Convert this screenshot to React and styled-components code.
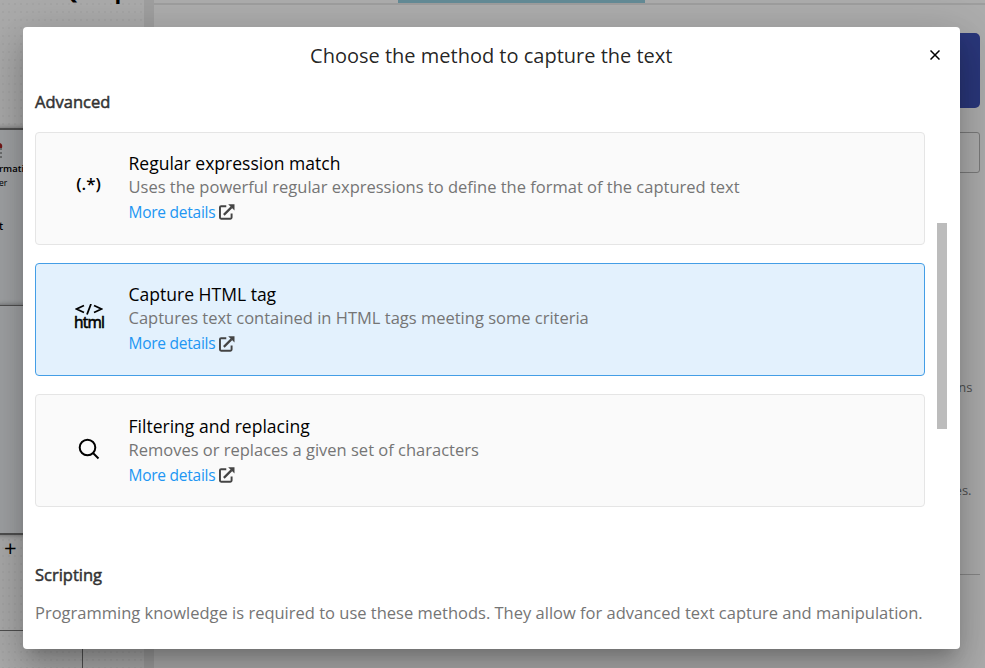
import React, { useState } from 'react';
import styled, { createGlobalStyle } from 'styled-components';

const GlobalStyle = createGlobalStyle`
  * {
    box-sizing: border-box;
  }

  body {
    margin: 0;
    overflow: hidden;
    font-family: 'Open Sans', 'Noto Sans', sans-serif;
  }
`;

const Page = styled.div`
  position: relative;
  display: flex;
  width: 985px;
  height: 668px;
  overflow: hidden;
  background: #fff;
`;

const Canvas = styled.div`
  position: relative;
  width: 144px;
  overflow: hidden;
  background-color: #fdfdfd;
  background-image: radial-gradient(#f3f3f3 0.7px, transparent 0.9px);
  background-size: 6px 8px;
`;

const CanvasTitle = styled.div`
  position: absolute;
  left: 61px;
  top: -23px;
  font-size: 22px;
  font-weight: 700;
  line-height: 26px;
  white-space: pre;
  word-spacing: 0.3px;
`;

const Node = styled.div`
  position: absolute;
  left: -60px;
  top: ${(p) => p.$top}px;
  width: ${(p) => p.$width}px;
  height: ${(p) => p.$height}px;
  background: ${(p) => p.$fill || 'transparent'};
  border: solid #777;
  border-width: ${(p) => p.$border || '1px'};
  box-shadow: ${(p) => (p.$raised ? '0 0 5px rgba(0, 0, 0, 0.4)' : 'none')};
`;

const NodeText = styled.div`
  position: absolute;
  left: ${(p) => p.$left}px;
  top: ${(p) => p.$top}px;
  font-size: ${(p) => p.$size}px;
  line-height: 14px;
  font-weight: ${(p) => p.$weight || 600};
  color: #000;
  white-space: nowrap;
`;

const NodeIcon = styled.svg`
  position: absolute;
  left: 0;
  top: 142px;
`;

const Divider = styled.div`
  width: 10px;
  background: #eaeaea;
`;

const Panel = styled.div`
  flex: 1;
  display: flex;
  flex-direction: column;
  align-items: flex-end;
  padding-right: 5.5px;
`;

const TabBar = styled.div`
  align-self: stretch;
  height: 5px;
  margin-right: -6px;
  padding-left: 244px;
  border-bottom: 2px solid #e9e9e9;
`;

const ActiveTab = styled.div`
  width: 247px;
  height: 3px;
  background: #94cddd;
`;

const PanelButton = styled.div`
  width: 120px;
  height: 75px;
  margin-top: 27.5px;
  border-radius: 5px;
  background: #3f51b5;
`;

const PanelField = styled.div`
  width: 120px;
  height: 41px;
  margin-top: 24.5px;
  border: 1px solid #b5b5b5;
  border-radius: 3px;
`;

const PanelText = styled.p`
  margin: ${(p) => p.$gap}px ${(p) => p.$right}px 0 0;
  color: #777;
  font-size: 13px;
  line-height: 20px;
`;

const PanelRule = styled.div`
  width: 120px;
  margin-top: 74px;
  border-top: 1px solid #c8c8c8;
`;

const Backdrop = styled.div`
  position: absolute;
  inset: 0;
  display: flex;
  align-items: flex-start;
  padding: 27px 0 0 23px;
  background: rgba(0, 0, 0, 0.32);
`;

const Dialog = styled.div`
  display: flex;
  flex-direction: column;
  width: 936.5px;
  height: 621.5px;
  border-radius: 4px;
  background: #fff;
  box-shadow: 0 11px 15px -7px rgba(0, 0, 0, 0.2), 0 24px 38px 3px rgba(0, 0, 0, 0.14),
    0 9px 46px 8px rgba(0, 0, 0, 0.12);
`;

const DialogHeader = styled.div`
  display: grid;
  grid-template-columns: 48px 1fr 48px;
  align-items: center;
  height: 56px;
`;

const DialogTitle = styled.h2`
  grid-column: 2;
  margin: 0;
  padding-top: 2px;
  color: rgba(0, 0, 0, 0.87);
  font-size: 20px;
  font-weight: 400;
  line-height: 32px;
  text-align: center;
`;

const CloseButton = styled.button`
  display: flex;
  justify-content: center;
  padding: 0 1.5px 0 0;
  border: 0;
  background: none;
  color: #000;
`;

const DialogBody = styled.div`
  flex: 1;
  display: flex;
  justify-content: space-between;
  padding: 0 12px;
`;

const Methods = styled.div`
  width: 890px;
`;

const SectionTitle = styled.h3`
  margin: ${(p) => p.$gap}px 0 0;
  color: #333;
  font-size: 16.5px;
  font-weight: 400;
  line-height: 24px;
  -webkit-text-stroke: 0.5px #333;
`;

const MethodList = styled.div`
  display: flex;
  flex-direction: column;
  gap: 18.4px;
  margin-top: 17.5px;
`;

const MethodCard = styled.div`
  display: flex;
  height: 113px;
  padding-top: 18.3px;
  border: 1px solid ${(p) => (p.$selected ? '#449ee6' : '#e5e5e5')};
  border-radius: 4px;
  background: ${(p) => (p.$selected ? '#e3f1fd' : '#fafafa')};
  cursor: pointer;
`;

const MethodIcon = styled.div`
  display: flex;
  align-items: center;
  justify-content: center;
  width: 106px;
  height: 70px;
  padding-right: 1px;
  margin-right: -13.5px;
`;

const Regex = styled.span`
  padding-bottom: 4px;
  font-size: 17px;
  font-weight: 600;
  line-height: 20px;
`;

const HtmlMark = styled.span`
  display: flex;
  flex-direction: column;
  align-items: center;
  gap: 0;
  padding-left: 1px;
  font-size: 15.5px;
  font-weight: 400;
  letter-spacing: -0.8px;
  line-height: 15px;
  -webkit-text-stroke: 0.6px #000;
`;

const MethodTitle = styled.div`
  color: #000;
  font-size: 17.55px;
  line-height: 24px;
`;

const MethodText = styled.div`
  color: #757575;
  font-size: 16.5px;
  line-height: 24px;
`;

const MoreLink = styled.a`
  display: flex;
  align-items: center;
  gap: 4px;
  margin-top: 1px;
  color: #2196f3;
  font-size: 15.5px;
  letter-spacing: -0.25px;
  line-height: 25px;
`;

const Note = styled.p`
  margin: 12.5px 0 0;
  color: #757575;
  font-size: 16.5px;
  line-height: 26px;
  white-space: nowrap;
`;

const ScrollTrack = styled.div`
  width: 11px;
  padding-top: 140px;
`;

const ScrollThumb = styled.div`
  width: 10.5px;
  height: 206px;
  background: #bcbcbc;
`;

const TagIcon = () => (
  <svg width="28" height="11" viewBox="0 0 28 11" fill="none" stroke="#000" strokeWidth="1.8">
    <path d="M9 1.5 1.5 5 9 8.5M19 1.5 26.5 5 19 8.5M16 0 12 10.5" />
  </svg>
);

const SearchIcon = () => (
  <svg width="22" height="22" viewBox="0 0 22 22" fill="none" stroke="#000" strokeWidth="2">
    <circle cx="9.5" cy="9.5" r="7.8" />
    <path d="M15 15 20.5 20.5" />
  </svg>
);

const ExternalIcon = () => (
  <svg width="15.5" height="16" viewBox="0 0 16 16" fill="none" stroke="#444" strokeWidth="2">
    <path d="M7.5 2H2.2Q1 2 1 3.2V13.8Q1 15 2.2 15H11.8Q13 15 13 13.8V9.5" />
    <path d="M5 11 13 3" strokeWidth="2.3" />
    <path d="M9.5 0H16V6.5Z" fill="#444" stroke="none" />
  </svg>
);

const CloseIcon = () => (
  <svg width="10" height="10" viewBox="0 0 10 10" stroke="currentColor" strokeWidth="1.5">
    <path d="M.5.5 9.5 9.5M9.5.5.5 9.5" />
  </svg>
);

const methods = [
  {
    id: 'regex',
    title: 'Regular expression match',
    text: 'Uses the powerful regular expressions to define the format of the captured text',
    icon: <Regex>(.*)</Regex>
  },
  {
    id: 'html',
    title: 'Capture HTML tag',
    text: 'Captures text contained in HTML tags meeting some criteria',
    icon: (
      <HtmlMark>
        <TagIcon />
        <span>html</span>
      </HtmlMark>
    )
  },
  {
    id: 'filter',
    title: 'Filtering and replacing',
    text: 'Removes or replaces a given set of characters',
    icon: <SearchIcon />
  }
];

const Workspace = () => (
  <>
    <Canvas>
      <CanvasTitle>{'Q      p'}</CanvasTitle>
      <Node $top={128} $width={190} $height={178} $fill="#edf0f3" $border="2px 2px 1px" $raised />
      <Node $top={305} $width={190} $height={230} $fill="#edf0f3" $border="1px 2px 2px" $raised />
      <Node $top={630} $width={143} $height={60} />
      <NodeIcon width="4" height="19" viewBox="0 0 4 19">
        <path d="M0 1Q3 2 2 6H0" fill="#a22" />
        <path d="M0 7H2M0 11H2M0 15H2" stroke="#555" />
      </NodeIcon>
      <NodeText $left={-1} $top={162} $size={9.5}>rmation</NodeText>
      <NodeText $left={-1} $top={176} $size={8.5} $weight={400}>er</NodeText>
      <NodeText $left={-1} $top={219} $size={10.5}>t</NodeText>
      <NodeText $left={4} $top={540} $size={22} $weight={500}>+</NodeText>
    </Canvas>
    <Divider />
    <Panel>
      <TabBar>
        <ActiveTab />
      </TabBar>
      <PanelButton />
      <PanelField />
      <PanelText $gap={203.5} $right={7}>conditions</PanelText>
      <PanelText $gap={83.5} $right={8}>values.</PanelText>
      <PanelRule />
    </Panel>
  </>
);

const App = () => {
  const [selected, setSelected] = useState('html');

  return (
    <Page>
      <GlobalStyle />
      <Workspace />
      <Backdrop>
        <Dialog role="dialog">
          <DialogHeader>
            <DialogTitle>Choose the method to capture the text</DialogTitle>
            <CloseButton aria-label="Close">
              <CloseIcon />
            </CloseButton>
          </DialogHeader>
          <DialogBody>
            <Methods>
              <SectionTitle $gap={7}>Advanced</SectionTitle>
              <MethodList>
                {methods.map((method) => (
                  <MethodCard
                    key={method.id}
                    $selected={method.id === selected}
                    onClick={() => setSelected(method.id)}
                  >
                    <MethodIcon>{method.icon}</MethodIcon>
                    <div>
                      <MethodTitle>{method.title}</MethodTitle>
                      <MethodText>{method.text}</MethodText>
                      <MoreLink>
                        More details
                        <ExternalIcon />
                      </MoreLink>
                    </div>
                  </MethodCard>
                ))}
              </MethodList>
              <SectionTitle $gap={56}>Scripting</SectionTitle>
              <Note>
                Programming knowledge is required to use these methods. They allow for advanced text
                capture and manipulation.
              </Note>
            </Methods>
            <ScrollTrack>
              <ScrollThumb />
            </ScrollTrack>
          </DialogBody>
        </Dialog>
      </Backdrop>
    </Page>
  );
};

export default App;
